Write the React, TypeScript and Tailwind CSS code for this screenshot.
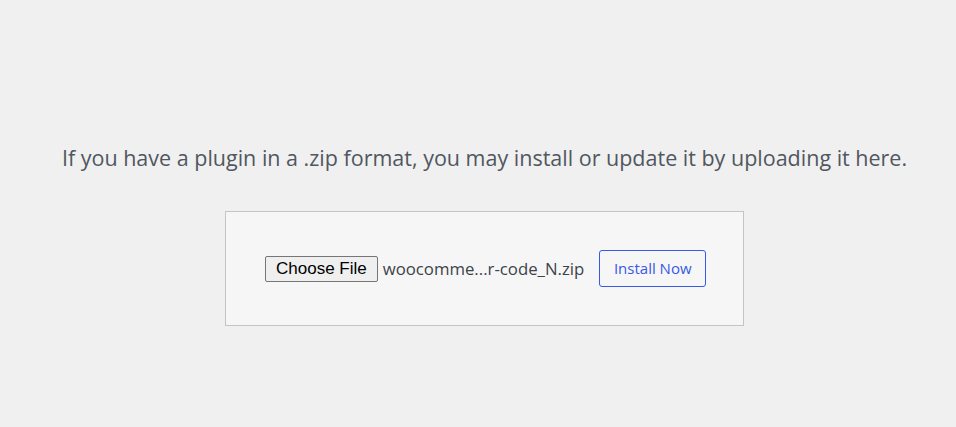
export default function App() {
  return (
    <div
      className="min-h-[427px] w-full bg-[#f0f0f1] pl-[13px] pt-[142px] text-[#50575e]"
      style={{ fontFamily: '"Open Sans", "Noto Sans", sans-serif' }}
    >
      <p className="text-center text-[21.5px] leading-[32px]">
        If you have a plugin in a .zip format, you may install or update it by uploading it here.
      </p>

      <div className="mx-auto mt-[37px] flex h-[115px] w-[519px] items-center border border-[#c3c4c7] bg-[#f6f6f6] pl-[39px]">
        <span
          className="flex h-[26px] items-center rounded-[2px] border border-[#767676] bg-[#efefef] px-[10px] text-[17px] text-black"
          style={{ fontFamily: '"Liberation Sans", Arial, sans-serif' }}
        >
          Choose File
        </span>
        <span className="ml-[5px] text-[16.75px] text-[#3c434a]">woocomme...r-code_N.zip</span>
        <button className="ml-[15px] flex h-[37px] w-[107px] items-center justify-center rounded-[3px] border border-[#3858e9] bg-[#f6f6f6] text-[15px] text-[#3858e9]">
          Install Now
        </button>
      </div>
    </div>
  );
}
